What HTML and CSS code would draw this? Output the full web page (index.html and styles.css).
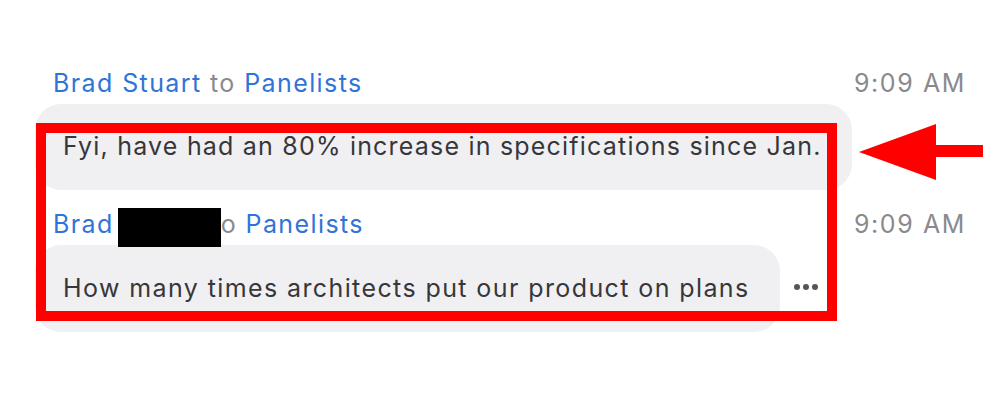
FILE: index.html
```html
<!DOCTYPE html>
<html lang="en">
<head>
<meta charset="utf-8">
<title>Chat</title>
<link rel="stylesheet" href="styles.css">
</head>
<body>
<div class="stage">
  <div class="chat">
    <div class="message">
      <div class="meta">
        <span class="who"><span class="name">Brad Stuart</span> <span class="to">to</span> <span class="name">Panelists</span></span>
        <span class="time">9:09 AM</span>
      </div>
      <div class="row">
        <div class="bubble">Fyi, have had an 80% increase in specifications since Jan.</div>
      </div>
    </div>
    <div class="message second">
      <div class="meta">
        <span class="who"><span class="name">Brad</span><span class="redact"></span><span class="to">o</span> <span class="name">Panelists</span></span>
        <span class="time">9:09 AM</span>
      </div>
      <div class="row">
        <div class="bubble">How many times architects put our product on plans</div>
        <span class="more"><i></i><i></i><i></i></span>
      </div>
    </div>
  </div>
  <div class="highlight"></div>
  <svg class="arrow" width="126" height="58" viewBox="0 0 126 58">
    <polygon points="0,28 77,0 77,21 124,21 124,33 77,33 77,56" fill="#ff0000"/>
  </svg>
</div>
</body>
</html>
```
FILE: styles.css
```css
html, body {
  margin: 0;
  padding: 0;
  background: #ffffff;
}
.stage {
  position: relative;
  width: 1000px;
  height: 403px;
  font-family: "Inter", "Liberation Sans", sans-serif;
  font-size: 25px;
  letter-spacing: 1.2px;
}
.chat {
  display: flex;
  flex-direction: column;
  gap: 19px;
  padding: 68px 35px 0 35px;
}
.message {
  display: flex;
  flex-direction: column;
  gap: 6px;
}
.meta {
  display: flex;
  justify-content: space-between;
  align-items: center;
  height: 30px;
  line-height: 30px;
  padding-left: 18px;
  letter-spacing: 1.4px;
}
.name { color: #2f74d8; }
.to { color: #8a8a8e; }
.time { color: #8a8a8e; letter-spacing: 1.6px; margin-right: -1px; }
.redact {
  display: inline-block;
  width: 103px;
  height: 39px;
  background: #000000;
  vertical-align: middle;
  margin: -6px 0 -6px 4px;
  position: relative;
  top: 2px;
}
.row {
  display: flex;
  align-items: center;
}
.bubble {
  background: #f0f0f3;
  color: #37373a;
  border-radius: 26px;
  height: 86px;
  display: flex;
  align-items: center;
  padding: 0 30px 2px 28px;
  box-sizing: border-box;
  white-space: nowrap;
}
.second .bubble {
  height: 87px;
  letter-spacing: 1.4px;
}
.more {
  display: flex;
  gap: 3px;
  margin-left: 14px;
  margin-top: -3px;
}
.more i {
  display: block;
  width: 6px;
  height: 6px;
  border-radius: 50%;
  background: #55555a;
}
.highlight {
  position: absolute;
  left: 36px;
  top: 123px;
  width: 781px;
  height: 178px;
  border: 10px solid #ff0000;
}
.arrow {
  position: absolute;
  left: 859px;
  top: 124px;
}
```
